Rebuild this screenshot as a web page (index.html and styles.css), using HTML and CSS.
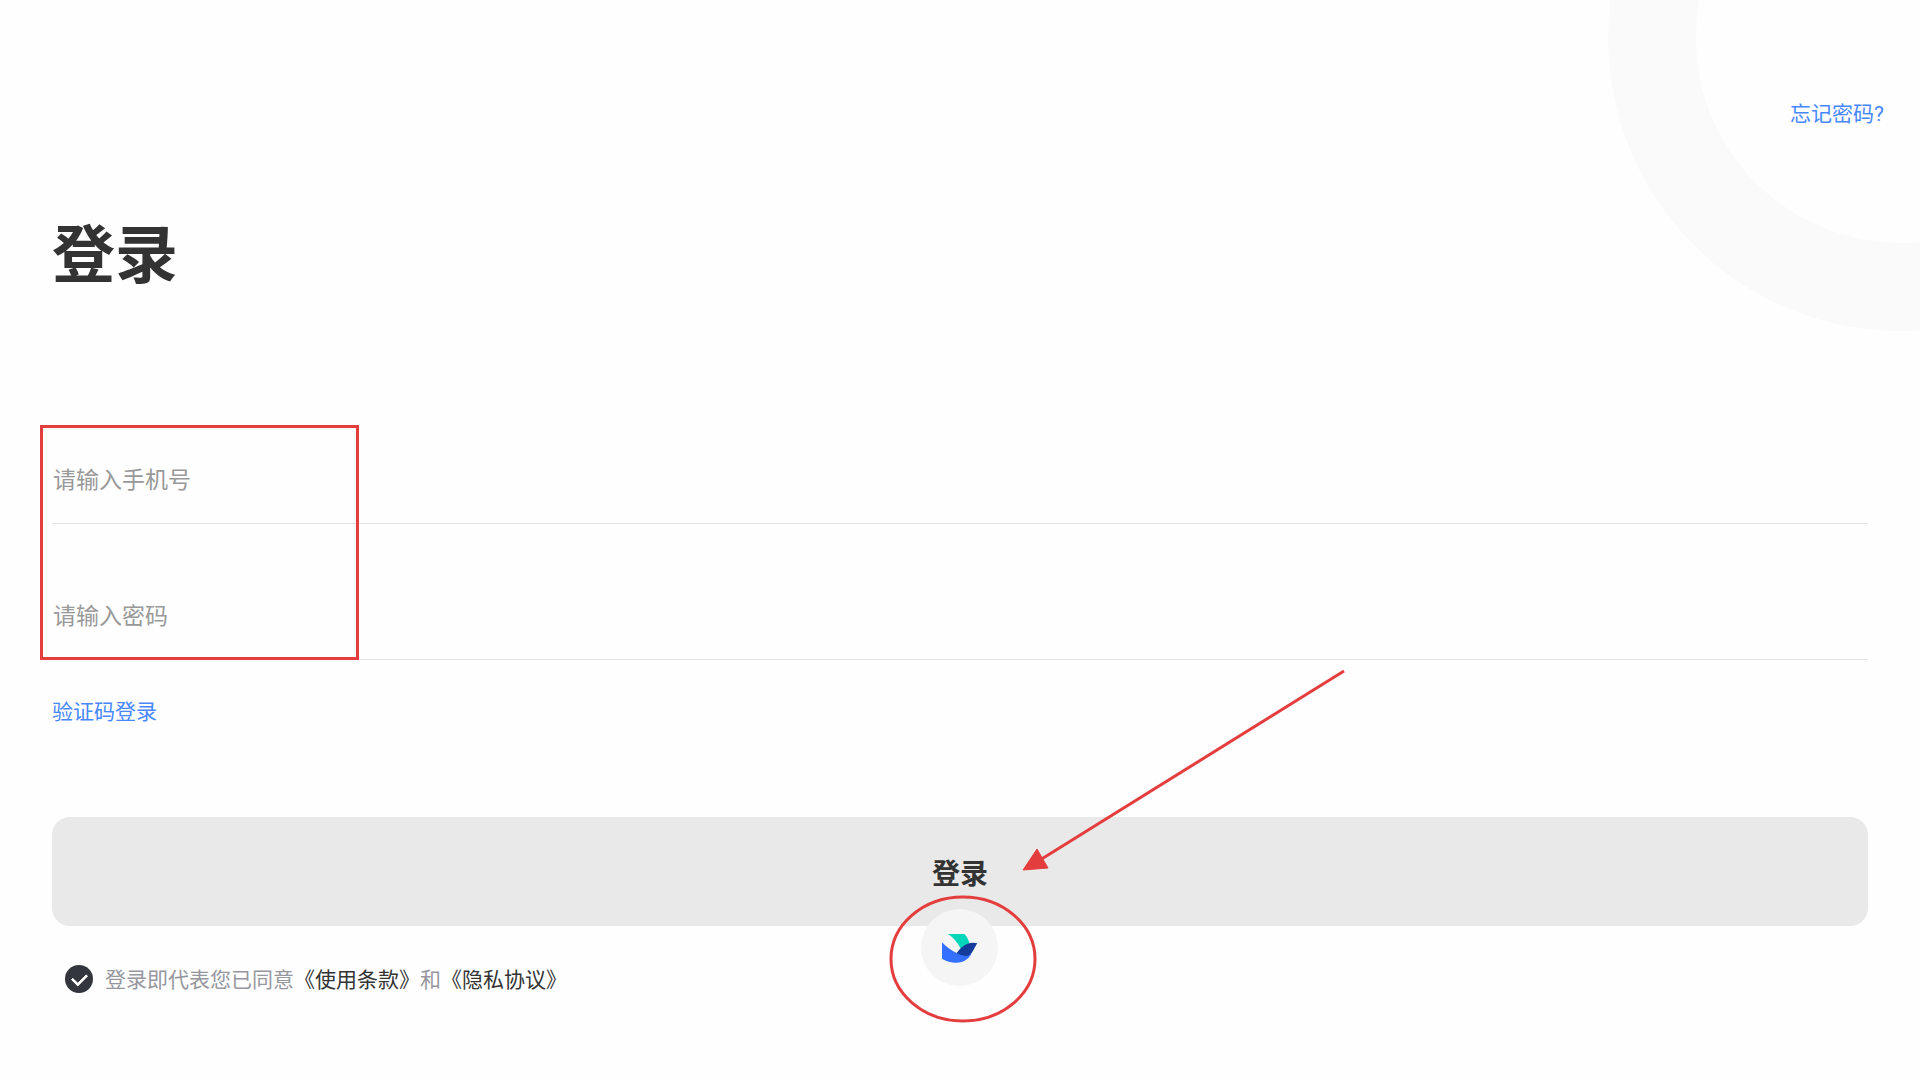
FILE: index.html
```html
<!DOCTYPE html>
<html lang="zh-CN">
<head>
<meta charset="utf-8">
<meta name="viewport" content="width=device-width, initial-scale=1">
<title>登录</title>
<link rel="stylesheet" href="styles.css">
</head>
<body>
<div class="page">
  <div class="ring" aria-hidden="true"></div>
  <header class="header"><a class="link" href="#forgot">忘记密码?</a></header>
  <main class="main">
    <h1 class="title">登录</h1>
    <form class="form">
      <div class="fields">
        <input class="field" type="tel" placeholder="请输入手机号" aria-label="请输入手机号">
        <input class="field" type="password" placeholder="请输入密码" aria-label="请输入密码">
        <div class="mark-box" aria-hidden="true"></div>
      </div>
      <a class="link code-link" href="#code">验证码登录</a>
      <div class="action">
        <button class="submit" type="button">登录</button>
        <button class="brand" type="button" aria-label="飞书">
          <svg class="brand-icon" viewBox="153 234 231 231" aria-hidden="true">
            <path fill="#00d6b9" d="M234 309H284Q295 322 299 337Q284 344 273 354Q258 325 234 309Z"/>
            <path fill="#3370ff" d="M216 334V383Q236 395 258 395C284 395 299 380 304 368L260 366Q234 354 216 334Z"/>
            <path fill="#133c9a" d="M260 366C275 346 295 330 322 337C312 350 308 374 288 375Q272 374 260 366Z"/>
          </svg>
        </button>
        <svg class="marks" viewBox="0 0 480 380" aria-hidden="true">
          <ellipse cx="83" cy="309" rx="72" ry="62"/>
          <path d="M464 21L160 210"/>
          <path class="marks-head" d="M143 220L157 199L168 218Z"/>
        </svg>
      </div>
      <div class="agreement">
        <input class="check" id="agree" type="checkbox" checked>
        <label class="terms" for="agree">登录即代表您已同意<a href="#terms">《使用条款》</a>和<a href="#privacy">《隐私协议》</a></label>
      </div>
    </form>
  </main>
</div>
</body>
</html>
```
FILE: styles.css
```css
* { box-sizing: border-box; }

body {
  margin: 0;
  background: #fefefe;
  color: #333;
  font-family: Roboto, "Noto Sans CJK SC", sans-serif;
}

.page {
  position: relative;
  min-height: 100vh;
  overflow: hidden;
}

.ring {
  position: absolute;
  top: -255px;
  right: -274px;
  width: 586px;
  height: 586px;
  border: 88px solid #fafafa;
  border-radius: 50%;
}

.header {
  position: relative;
  display: flex;
  justify-content: flex-end;
  padding: 98px 36px 0;
}

.link {
  color: #4787ff;
  font-size: 21px;
  line-height: 32px;
  text-decoration: none;
}

.main {
  position: relative;
  padding: 78px 52px 0;
}

.title {
  margin: 0;
  font-size: 63px;
  font-weight: 700;
  line-height: 96px;
}

.form { padding-top: 132px; }

.fields { position: relative; }

.field {
  display: block;
  width: 100%;
  height: 88px;
  margin-bottom: 48px;
  padding: 2px 0 0 1px;
  border: 0;
  border-bottom: 1px solid #e2e2e2;
  background: transparent;
  color: #333;
  font: 23px/32px Roboto, "Noto Sans CJK SC", sans-serif;
  outline: none;
}

.field::placeholder { color: #999; opacity: 1; }

.fields .field:nth-child(2) { margin-bottom: 36px; }

.mark-box {
  position: absolute;
  top: -11px;
  left: -12px;
  width: 319px;
  height: 235px;
  border: 3px solid #e43d3d;
  pointer-events: none;
}

.code-link { display: inline-block; }

.action {
  position: relative;
  padding-top: 89px;
}

.submit {
  display: block;
  width: 100%;
  height: 109px;
  padding: 6px 0 0;
  border: 0;
  border-radius: 18px;
  background: #e9e9e9;
  color: #333;
  font: 700 28px/40px Roboto, "Noto Sans CJK SC", sans-serif;
}

.brand {
  position: absolute;
  bottom: -60px;
  left: calc(50% - 39px);
  width: 77px;
  height: 77px;
  padding: 0;
  border: 0;
  border-radius: 50%;
  background: #f5f5f6;
}

.brand-icon { display: block; width: 100%; height: 100%; }

.marks {
  position: absolute;
  top: -78px;
  left: calc(50% - 80px);
  width: 480px;
  height: 380px;
  fill: none;
  stroke: #e43d3d;
  stroke-width: 3;
  pointer-events: none;
}

.marks-head { fill: #e43d3d; stroke-width: 1; }

.agreement {
  display: flex;
  align-items: center;
  gap: 12px;
  padding: 36px 13px 0;
}

.check {
  flex: none;
  width: 28px;
  height: 28px;
  margin: 0;
  appearance: none;
  border-radius: 50%;
  background: #33363d;
  display: grid;
  place-items: center;
}

.check:checked::before {
  content: "";
  width: 12px;
  height: 7px;
  border: solid #fff;
  border-width: 0 0 3px 3px;
  border-radius: 1px;
  transform: translateY(-1px) rotate(-45deg);
}

.terms {
  padding-top: 2px;
  color: #96979e;
  font-size: 21px;
  line-height: 32px;
}

.terms a { color: #333; text-decoration: none; }
```
